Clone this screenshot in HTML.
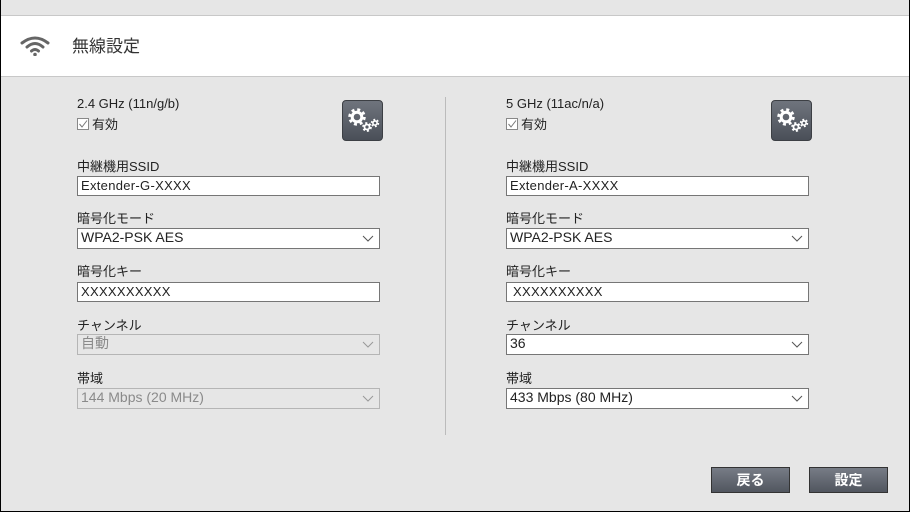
<!DOCTYPE html>
<html><head><meta charset="utf-8"><style>
*{margin:0;padding:0;box-sizing:border-box}
body{width:910px;height:512px;overflow:hidden;background:#e6e6e6;font-family:"Liberation Sans","Noto Sans CJK JP",sans-serif;color:#222;position:relative}
.frame{position:absolute;left:0;top:0;width:910px;height:512px;border:1px solid #000;border-top:none}
.hdr{position:absolute;left:1px;top:15px;width:908px;height:62px;background:#fff;border-top:1px solid #c8c8c8;border-bottom:1px solid #c8c8c8}
.title{position:absolute;left:72px;top:32px;font-size:17px;color:#333}
.a{position:absolute;font-size:13px;white-space:nowrap}
.in{position:absolute;width:303px;height:20px;background:#fff;border:1px solid #767676;font-size:13px;padding-left:3px;line-height:18px;letter-spacing:0.3px}
.sel{position:absolute;width:303px;height:21px;background:#fff;border:1px solid #767676;font-size:14px;padding-left:3px;line-height:17px}
.sel.dis{background:#e6e6e6;border-color:#b5b5b5;color:#8a8a8a}
.sel svg{position:absolute;right:5px;top:6px}
.gear{position:absolute;width:41px;height:41px;border-radius:4px;background:linear-gradient(#6f747d,#4a4f58);border:1px solid #3c3f44}
.btn{position:absolute;top:467px;width:79px;height:26px;background:linear-gradient(#777c86,#51565f);border:1px solid #333;color:#fff;font-size:14px;font-weight:bold;text-align:center;line-height:24px}
.cb{display:inline-block;width:12px;height:12px;border:1px solid #888;background:#fff;vertical-align:-1px;margin-right:3px;position:relative}
</style></head><body>
<div class="frame"></div>
<div class="hdr">
<svg style="position:absolute;left:19px;top:20px" width="30" height="20" viewBox="0 0 30 20"><g fill="none" stroke="#666" stroke-width="3" stroke-linecap="round"><path d="M2 7 Q15 -3 28 7"/><path d="M7 11 Q15 4 23 11"/><path d="M11.5 15 Q15 12 18.5 15"/></g><circle cx="15" cy="18.5" r="1.8" fill="#666"/></svg>
</div>
<div class="title">無線設定</div>
<div style="position:absolute;left:445px;top:97px;width:1px;height:338px;background:#bbb"></div>

<div class="a" style="left:77px;top:96px">2.4 GHz (11n/g/b)</div>
<div class="a" style="left:77px;top:114px"><span class="cb"><svg width="10" height="10" style="position:absolute;left:0;top:0"><path d="M1.5 5 L4 8 L9 1.5" fill="none" stroke="#777" stroke-width="1"/></svg></span>有効</div>
<div class="gear" style="left:342px;top:100px"><svg width="39" height="39" viewBox="0 0 39 39"><circle cx="14" cy="16" r="7" fill="none" stroke="#fff" stroke-width="3.5" stroke-dasharray="2.8 2.7"/><circle cx="14" cy="16" r="4.8" fill="none" stroke="#fff" stroke-width="3"/><circle cx="24" cy="26" r="3.6" fill="none" stroke="#fff" stroke-width="2.5" stroke-dasharray="1.9 1.9"/><circle cx="24" cy="26" r="2.5" fill="none" stroke="#fff" stroke-width="1.8"/><circle cx="32" cy="22" r="3.1" fill="none" stroke="#fff" stroke-width="2.2" stroke-dasharray="1.6 1.6"/><circle cx="32" cy="22" r="2.1" fill="none" stroke="#fff" stroke-width="1.6"/></svg></div>
<div class="a" style="left:77px;top:156px">中継機用SSID</div>
<div class="in" style="left:77px;top:176px">Extender-G-XXXX</div>
<div class="a" style="left:77px;top:208px">暗号化モード</div>
<div class="sel" style="left:77px;top:228px">WPA2-PSK AES<svg width="12" height="8"><path d="M1 1 L6 6 L11 1" fill="none" stroke="#555"/></svg></div>
<div class="a" style="left:77px;top:261px">暗号化キー</div>
<div class="in" style="left:77px;top:282px">XXXXXXXXXX</div>
<div class="a" style="left:77px;top:315px">チャンネル</div>
<div class="sel dis" style="left:77px;top:334px">自動<svg width="12" height="8"><path d="M1 1 L6 6 L11 1" fill="none" stroke="#999"/></svg></div>
<div class="a" style="left:77px;top:368px">帯域</div>
<div class="sel dis" style="left:77px;top:388px">144 Mbps (20 MHz)<svg width="12" height="8"><path d="M1 1 L6 6 L11 1" fill="none" stroke="#999"/></svg></div>

<div class="a" style="left:506px;top:96px">5 GHz (11ac/n/a)</div>
<div class="a" style="left:506px;top:114px"><span class="cb"><svg width="10" height="10" style="position:absolute;left:0;top:0"><path d="M1.5 5 L4 8 L9 1.5" fill="none" stroke="#777" stroke-width="1"/></svg></span>有効</div>
<div class="gear" style="left:771px;top:100px"><svg width="39" height="39" viewBox="0 0 39 39"><circle cx="14" cy="16" r="7" fill="none" stroke="#fff" stroke-width="3.5" stroke-dasharray="2.8 2.7"/><circle cx="14" cy="16" r="4.8" fill="none" stroke="#fff" stroke-width="3"/><circle cx="24" cy="26" r="3.6" fill="none" stroke="#fff" stroke-width="2.5" stroke-dasharray="1.9 1.9"/><circle cx="24" cy="26" r="2.5" fill="none" stroke="#fff" stroke-width="1.8"/><circle cx="32" cy="22" r="3.1" fill="none" stroke="#fff" stroke-width="2.2" stroke-dasharray="1.6 1.6"/><circle cx="32" cy="22" r="2.1" fill="none" stroke="#fff" stroke-width="1.6"/></svg></div>
<div class="a" style="left:506px;top:156px">中継機用SSID</div>
<div class="in" style="left:506px;top:176px">Extender-A-XXXX</div>
<div class="a" style="left:506px;top:208px">暗号化モード</div>
<div class="sel" style="left:506px;top:228px">WPA2-PSK AES<svg width="12" height="8"><path d="M1 1 L6 6 L11 1" fill="none" stroke="#555"/></svg></div>
<div class="a" style="left:506px;top:261px">暗号化キー</div>
<div class="in" style="left:506px;top:282px;padding-left:6px">XXXXXXXXXX</div>
<div class="a" style="left:506px;top:315px">チャンネル</div>
<div class="sel" style="left:506px;top:334px">36<svg width="12" height="8"><path d="M1 1 L6 6 L11 1" fill="none" stroke="#555"/></svg></div>
<div class="a" style="left:506px;top:368px">帯域</div>
<div class="sel" style="left:506px;top:388px">433 Mbps (80 MHz)<svg width="12" height="8"><path d="M1 1 L6 6 L11 1" fill="none" stroke="#555"/></svg></div>

<div class="btn" style="left:711px">戻る</div>
<div class="btn" style="left:809px">設定</div>
</body></html>
